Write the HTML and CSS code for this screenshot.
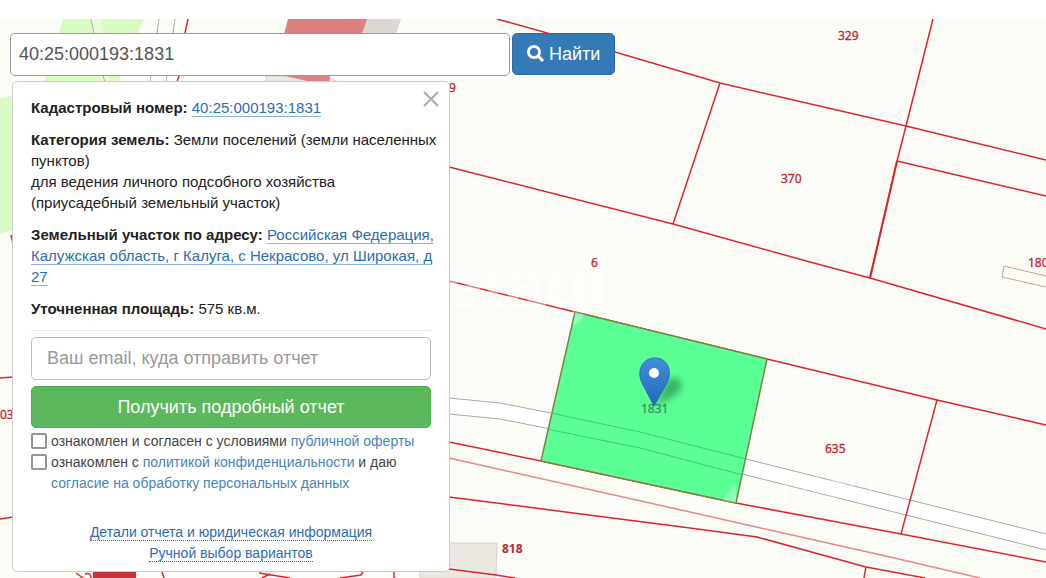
FILE: index.html
```
<!DOCTYPE html>
<html lang="ru">
<head>
    <meta charset="UTF-8">
    <meta name="viewport" content="width=device-width, initial-scale=1">
    <title>Кадастровая карта</title>
    <link rel="stylesheet" href="styles.css">
</head>
<body>
    <main class="map-page">
        <svg class="map" viewBox="0 19 1046 559" preserveAspectRatio="xMinYMin slice" aria-hidden="true">
            <defs>
                <linearGradient id="pin-fill" x1="0" y1="0" x2="0" y2="1">
                    <stop offset="0" stop-color="#3f8fd6"/>
                    <stop offset="1" stop-color="#2468bd"/>
                </linearGradient>
                <filter id="soft" x="-50%" y="-50%" width="200%" height="200%">
                    <feGaussianBlur stdDeviation="3"/>
                </filter>
            </defs>

            <!-- green areas and buildings -->
            <path class="park" d="M63 19H144L118 82H44Z"/>
            <path class="park" d="M0 98L13 96V230L0 234Z"/>
            <path class="path" d="M91 19H101L111 82H100Z"/>
            <path class="building" d="M366 19H401L396 34H361Z"/>
            <path class="house" d="M266 76H286L312 82H266ZM330 78L338 82H329Z"/>
            <path class="shop" d="M288 19H367L362 34H284ZM286 76H330L329 82H312Z"/>
            <path class="house" d="M420 543L497 543L496 578H420Z"/>
            <path class="shop-dark" d="M93 572H136V578H93Z"/>

            <!-- roads -->
            <path class="road" d="M449 398L500 403L551 413L640 432L746 459L1046 534V550L746 475L640 448L551 429L500 419L449 414Z"/>
            <path class="road-line" d="M449 398L500 403L551 413L640 432L746 459L1046 534M449 414L500 419L551 429L640 448L746 475L1046 550M91 19L94 33M103 76L105 82M159 19L157 33M151 76L150 82M175 19L173 33M167 76L166 82"/>
            <path class="road-brown" d="M1046 276L1004 266L1002 277L1046 287"/>

            <!-- cadastral borders -->
            <path class="border" d="M497 19L615 52L720 83L906 126L1046 160M933 19L906 126L897 161L870 278M897 161L1046 196M720 83L673 224M449 167L673 224L810 262L870 278L1046 329M449 281L575 312L767 359L937 400L1046 425M937 400L901 534M449 442L541 461L736 503L901 534L1046 562M449 497L690 528L757 537L866 567L925 578M866 567L864 578M188 19L185 33M179 76L177 82M0 378L13 377M0 519L13 517M449 569L496 575L515 578M11 235L13 244M76 573L83 578M85 574Q91 572 91 578M162 572L164 578M259 573L290 578M262 578L270 574M340 578L361 575L363 572M394 572V578"/>
            <path class="border-light" d="M449 458L690 512L890 557L980 578"/>
            <path class="border-heavy" d="M897 161L870 278"/>

            <!-- watermark -->
            <text class="watermark" x="444" y="308">etagi</text>

            <!-- selected parcel -->
            <path class="parcel" d="M575 312L767 359L736 503L541 461Z"/>
            <path class="parcel-road" d="M551 413L640 432L746 459M547 429L640 448L743 475"/>
            <path class="parcel-shine" d="M575 312L584 314Q582 323 573 325ZM736 483L722 500L736 503Z"/>
            <path class="watermark-line" d="M746 483L758 499M785 476V505M792 502L815 480V500M833 500V482H852V500M870 480V502"/>

            <g class="labels">
                <text x="838" y="40">329</text>
                <text x="781" y="183">370</text>
                <text x="591" y="267">6</text>
                <text x="1028" y="267">180</text>
                <text x="825" y="453">635</text>
                <text x="449" y="92">9</text>
                <text x="0" y="419">03</text>
                <text class="label-bold" x="502" y="553">818</text>
                <text class="label-parcel" x="641" y="413">1831</text>
            </g>

            <!-- marker -->
            <path class="pin-shadow" filter="url(#soft)" d="M656 406L666 382Q674 374 681 381Q684 390 674 396Z"/>
            <path class="pin" d="M654 406L642 383C636 370 643 358 655 358C667 358 673 370 667 383Z"/>
            <circle cx="654" cy="373" r="5" fill="#fff"/>
        </svg>

        <div class="overlay">
            <form class="search">
                <input class="search-input" type="text" value="40:25:000193:1831" aria-label="Кадастровый номер">
                <button class="search-button" type="submit">
                    <svg class="search-icon" viewBox="0 0 18 18" aria-hidden="true">
                        <circle cx="7" cy="7" r="5.5"/>
                        <path d="M11 11L16 16"/>
                    </svg>
                    <span>Найти</span>
                </button>
            </form>

            <section class="card">
                <button class="close" type="button" aria-label="Закрыть">
                    <svg viewBox="0 0 16 16" aria-hidden="true"><path d="M1 1L15 15M15 1L1 15"/></svg>
                </button>

                <div class="details">
                    <p><b>Кадастровый номер:</b> <a href="#">40:25:000193:1831</a></p>
                    <p><b>Категория земель:</b> Земли поселений (земли населенных пунктов)<br>для ведения личного подсобного хозяйства (приусадебный земельный участок)</p>
                    <p><b>Земельный участок по адресу:</b> <a href="#">Российская Федерация, Калужская область, г Калуга, с Некрасово, ул Широкая, д 27</a></p>
                    <p><b>Уточненная площадь:</b> 575 кв.м.</p>
                </div>

                <form class="report">
                    <input class="email" type="email" placeholder="Ваш email, куда отправить отчет" aria-label="Ваш email">
                    <button class="report-button" type="submit">Получить подробный отчет</button>
                    <div class="agree">
                        <input type="checkbox" id="offer">
                        <label for="offer">ознакомлен и согласен с условиями <a href="#">публичной оферты</a></label>
                    </div>
                    <div class="agree">
                        <input type="checkbox" id="policy">
                        <label for="policy">ознакомлен с <a href="#">политикой конфиденциальности</a> и даю <a href="#">согласие на обработку персональных данных</a></label>
                    </div>
                </form>

                <nav class="links">
                    <a href="#">Детали отчета и юридическая информация</a>
                    <a href="#">Ручной выбор вариантов</a>
                </nav>
            </section>
        </div>
    </main>
</body>
</html>
```
FILE: styles.css
```
* { box-sizing: border-box; }
body {
    margin: 0;
    padding-top: 19px;
    background: #fff;
    color: #222;
    font-family: "Liberation Sans", Arial, sans-serif;
    font-size: 15px;
    line-height: 21px;
}
input, button {
    font-family: inherit;
    font-size: 18px;
}
button { cursor: pointer; }

/* map */
.map-page {
    position: relative;
    min-height: calc(100vh - 19px);
    overflow: hidden;
    background: #fcfcf7;
}
.map {
    position: absolute;
    top: 0;
    left: 0;
    width: 100%;
    height: 100%;
}
.park { fill: #dafac4; }
.path { fill: #eafadc; }
.building { fill: #dad7d0; }
.house { fill: #ebe8e2; stroke: #d5d2cc; }
.shop { fill: #df7f82; }
.shop-dark { fill: #c8323a; }
.road { fill: #fff; }
.road-line, .road-brown {
    fill: none;
    stroke: #aaa;
}
.road-brown { stroke: #c9a496; }
.border, .border-light, .border-heavy {
    fill: none;
    stroke: #db2630;
    stroke-width: 1.5;
}
.border-light { stroke: #e8868a; }
.border-heavy { stroke-width: 2; }
.watermark {
    fill: #fff;
    fill-opacity: 0.4;
    font-size: 70px;
    font-weight: bold;
}
.watermark-line {
    fill: none;
    stroke: #fff;
    stroke-width: 4;
    stroke-opacity: 0.3;
}
.parcel {
    fill: #5bff95;
    stroke: #7d8245;
    stroke-width: 1.5;
}
.parcel-road {
    fill: none;
    stroke: #42c873;
}
.parcel-shine {
    fill: #fff;
    fill-opacity: 0.3;
}
.labels {
    fill: #c0272f;
    stroke: #c0272f;
    stroke-width: 0.3;
    font-family: "Noto Sans", sans-serif;
    font-size: 12px;
}
.label-bold { font-weight: bold; stroke: none; }
.label-parcel { fill: #31985a; stroke: #31985a; }
.pin { fill: url(#pin-fill); stroke: #2c70b5; }
.pin-shadow { fill: #176c3a; fill-opacity: 0.5; }

/* search */
.overlay {
    position: relative;
    padding: 14px 10px 4px;
}
.search {
    display: flex;
    gap: 2px;
}
.search-input {
    flex: 0 1 500px;
    min-width: 0;
    height: 43px;
    padding: 0 8px;
    border: 1px solid #999;
    border-radius: 5px;
    background: #fff;
    color: #555;
}
.search-button {
    display: flex;
    align-items: center;
    justify-content: center;
    gap: 4px;
    height: 42px;
    padding: 0 14px;
    border: 1px solid #2e6da4;
    border-radius: 5px;
    background: #337ab7;
    color: #fff;
}
.search-icon {
    width: 18px;
    height: 18px;
    fill: none;
    stroke: #fff;
    stroke-width: 3;
}

/* card */
.card {
    position: relative;
    max-width: 438px;
    margin: 5px 2px 0;
    padding: 15px 18px 9px;
    border: 1px solid #ccc;
    border-radius: 5px;
    background: #fff;
}
.details { margin-right: -10px; }
.card p { margin: 0 0 11px; }
.card a { color: #2a6db0; }
.card p a {
    text-decoration-color: #86b2db;
    text-decoration-thickness: 1px;
    text-underline-offset: 3px;
}
.close {
    position: absolute;
    top: 9px;
    right: 10px;
    display: flex;
    padding: 0;
    border: 0;
    background: none;
}
.close svg {
    width: 16px;
    height: 16px;
    stroke: #aaa;
    stroke-width: 2;
}

/* report */
.report {
    padding-top: 6px;
    border-top: 1px solid #e8e8e8;
}
.email {
    display: block;
    width: 100%;
    height: 43px;
    margin-bottom: 6px;
    padding: 0 15px;
    border: 1px solid #bbb;
    border-radius: 5px;
}
.email::placeholder { color: #999; }
.report-button {
    display: block;
    width: 100%;
    height: 42px;
    margin-bottom: 3px;
    border: 1px solid #4cae4c;
    border-radius: 5px;
    background: #5cb85c;
    color: #fff;
}
.agree {
    display: flex;
    align-items: flex-start;
    gap: 4px;
    color: #444;
    font-size: 14px;
}
.agree input {
    flex: none;
    appearance: none;
    width: 16px;
    height: 16px;
    margin: 2px 0;
    border: 2px solid #929297;
    border-radius: 2px;
    background: #fff;
}
.agree input:checked { background: #337ab7; }
.agree a {
    color: #4585c0;
    text-decoration: none;
}
.links {
    display: flex;
    flex-direction: column;
    align-items: center;
    gap: 4px;
    margin-top: 30px;
    font-size: 14px;
    line-height: 16px;
}
.links a {
    border-bottom: 1px dotted #2a6db0;
    text-decoration: none;
}
```
